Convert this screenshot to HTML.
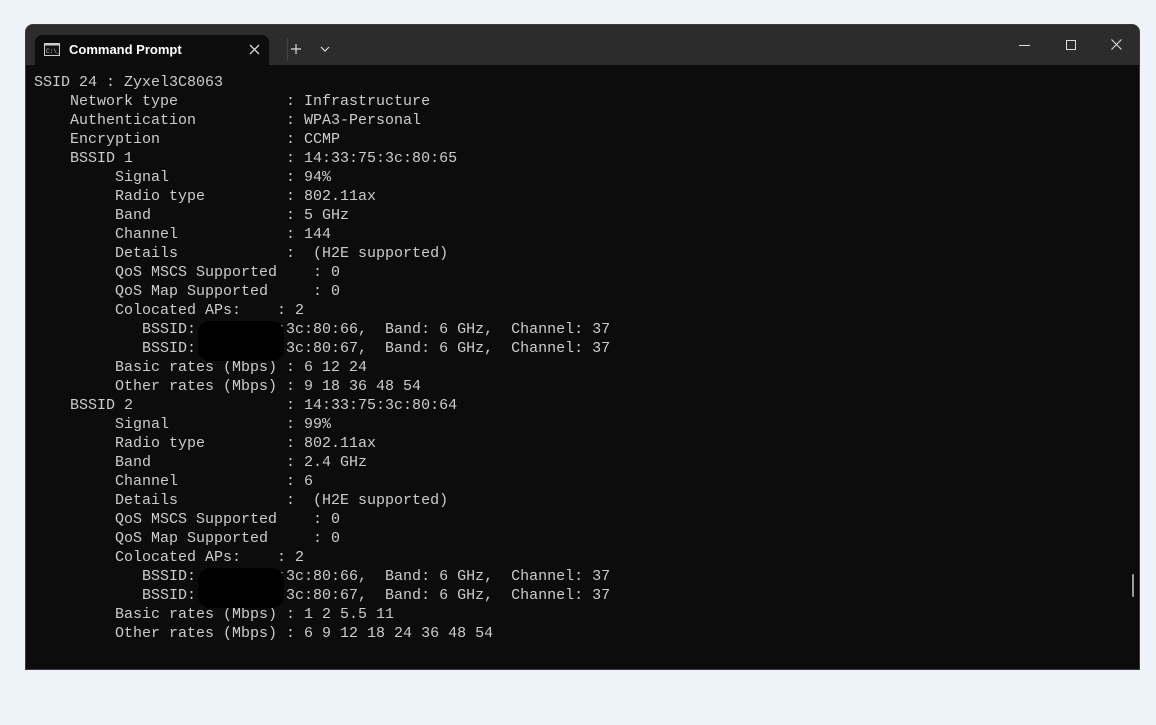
<!DOCTYPE html>
<html><head><style>
html,body{margin:0;padding:0;width:1156px;height:725px;background:#eef2f9;overflow:hidden}
.win{position:absolute;left:25px;top:24px;width:1115px;height:646px;background:#0c0c0c;border:1px solid #3a3a3a;box-sizing:border-box;border-radius:8px 8px 0 0;overflow:hidden}
.bar{position:absolute;left:0;top:0;width:100%;height:40px;background:#2c2c2c}
.tab{position:absolute;left:9px;top:10px;width:234px;height:30px;background:#0c0c0c;border-radius:7px 7px 0 0}
.tab .t{position:absolute;left:34px;top:7px;font:13px "Liberation Sans",sans-serif;color:#fff;font-weight:600}
pre{position:absolute;left:8px;top:48px;margin:0;font:15px/19px "Liberation Mono",monospace;color:#cccccc}
.blob{position:absolute;background:#000;border-radius:12px}
</style></head><body>
<div class="win">
<div class="bar"></div>
<div class="tab">
<svg style="position:absolute;left:9px;top:8px" width="16" height="13" viewBox="0 0 16 13"><rect x="0.5" y="0.5" width="15" height="12" fill="#111" stroke="#ccc"/><rect x="0.5" y="0.5" width="15" height="2" fill="#ccc"/><text x="2" y="10" font-size="6" fill="#ccc" font-family="Liberation Mono">C:\_</text></svg>
<span class="t">Command Prompt</span>
<svg style="position:absolute;left:214px;top:9px" width="11" height="11"><path d="M1 1L10 10M10 1L1 10" stroke="#ddd" stroke-width="1.3"/></svg>
</div>
<svg style="position:absolute;left:264px;top:18px" width="12" height="12"><path d="M6 1V11M1 6H11" stroke="#ddd" stroke-width="1.2"/></svg>
<div style="position:absolute;left:261px;top:13px;width:1px;height:23px;background:#444"></div>
<svg style="position:absolute;left:294px;top:21px" width="10" height="6"><path d="M1 1L5 5L9 1" stroke="#ddd" fill="none" stroke-width="1.2"/></svg>
<div style="position:absolute;left:993px;top:20px;width:11px;height:1px;background:#ddd"></div>
<div style="position:absolute;left:1040px;top:15px;width:8px;height:8px;border:1px solid #ddd"></div>
<svg style="position:absolute;left:1085px;top:14px" width="11" height="11"><path d="M0.5 0.5L10.5 10.5M10.5 0.5L0.5 10.5" stroke="#ddd" stroke-width="1.1"/></svg>
<pre>SSID 24 : Zyxel3C8063
    Network type            : Infrastructure
    Authentication          : WPA3-Personal
    Encryption              : CCMP
    BSSID 1                 : 14:33:75:3c:80:65
         Signal             : 94%
         Radio type         : 802.11ax
         Band               : 5 GHz
         Channel            : 144
         Details            :  (H2E supported)
         QoS MSCS Supported    : 0
         QoS Map Supported     : 0
         Colocated APs:    : 2
            BSSID: 14:33:75:3c:80:66,  Band: 6 GHz,  Channel: 37
            BSSID: 14:33:75:3c:80:67,  Band: 6 GHz,  Channel: 37
         Basic rates (Mbps) : 6 12 24
         Other rates (Mbps) : 9 18 36 48 54
    BSSID 2                 : 14:33:75:3c:80:64
         Signal             : 99%
         Radio type         : 802.11ax
         Band               : 2.4 GHz
         Channel            : 6
         Details            :  (H2E supported)
         QoS MSCS Supported    : 0
         QoS Map Supported     : 0
         Colocated APs:    : 2
            BSSID: 14:33:75:3c:80:66,  Band: 6 GHz,  Channel: 37
            BSSID: 14:33:75:3c:80:67,  Band: 6 GHz,  Channel: 37
         Basic rates (Mbps) : 1 2 5.5 11
         Other rates (Mbps) : 6 9 12 18 24 36 48 54</pre>
<div class="blob" style="left:172px;top:296px;width:86px;height:40px"></div>
<div class="blob" style="left:172px;top:543px;width:86px;height:40px"></div>
<div style="position:absolute;left:1106px;top:549px;width:2px;height:23px;background:#999;border-radius:1px"></div>
</div>
</body></html>
